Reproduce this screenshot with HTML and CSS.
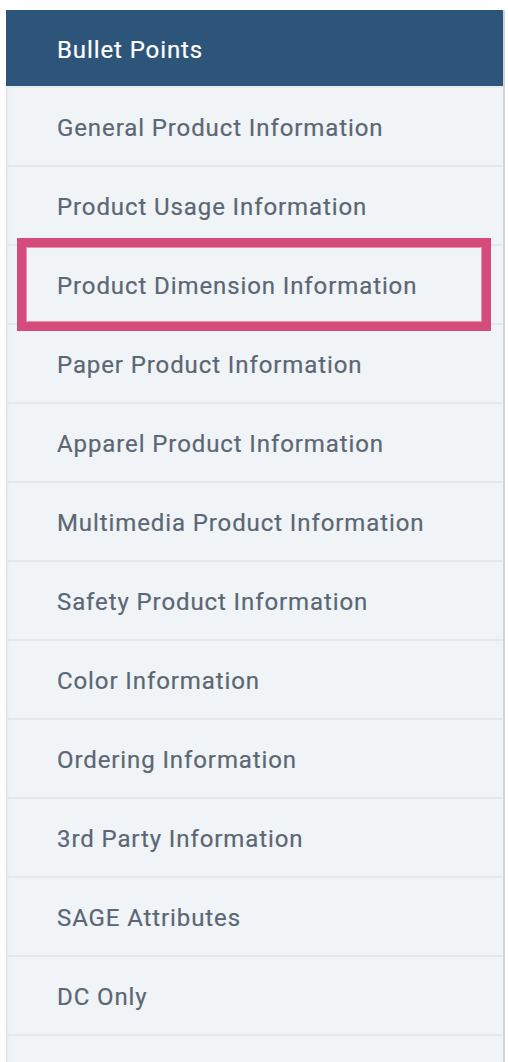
FILE: index.html
```html
<!DOCTYPE html>
<html>
<head>
<meta charset="utf-8">
<link rel="stylesheet" href="styles.css">
</head>
<body>
<div class="panel">
  <ul class="menu">
    <li class="item active">Bullet Points</li>
    <li class="item">General Product Information</li>
    <li class="item">Product Usage Information</li>
    <li class="item highlighted">Product Dimension Information<span class="mark"></span></li>
    <li class="item">Paper Product Information</li>
    <li class="item">Apparel Product Information</li>
    <li class="item">Multimedia Product Information</li>
    <li class="item">Safety Product Information</li>
    <li class="item">Color Information</li>
    <li class="item">Ordering Information</li>
    <li class="item">3rd Party Information</li>
    <li class="item">SAGE Attributes</li>
    <li class="item">DC Only</li>
    <li class="item empty"></li>
  </ul>
</div>
</body>
</html>
```
FILE: styles.css
```css
html, body {
  margin: 0;
  padding: 0;
  background: #ffffff;
  height: 100%;
  overflow: hidden;
}
.panel {
  padding-top: 10px;
  margin-left: 6px;
  width: 499px;
}
.menu {
  list-style: none;
  margin: 0;
  padding: 0;
  background: #f0f4f7;
  border-right: 2px solid #cfd5db;
  box-shadow: inset 3px 0 3px -2px #d9dee3;
}
.item {
  position: relative;
  box-sizing: border-box;
  height: 79px;
  display: flex;
  align-items: center;
  padding-left: 51px;
  padding-top: 3px;
  font-family: Roboto, "Liberation Sans", sans-serif;
  font-size: 24px;
  letter-spacing: 0.9px;
  color: #5b6774;
  -webkit-text-stroke: 0.2px #5b6774;
  border-bottom: 2px solid #e3e8ed;
}
.item.active {
  height: 78px;
  background: #2d5479;
  color: #ffffff;
  -webkit-text-stroke: 0.2px #ffffff;
  border-bottom: 2px solid #e6ebf0;
}
.item.empty {
  height: 40px;
  border-bottom: none;
}
.mark {
  position: absolute;
  left: 11px;
  right: 12px;
  top: -8px;
  bottom: -8px;
  border: 9px solid #d54c7a;
  box-shadow: inset 0 0 0 1px #e690ae;
}
```
